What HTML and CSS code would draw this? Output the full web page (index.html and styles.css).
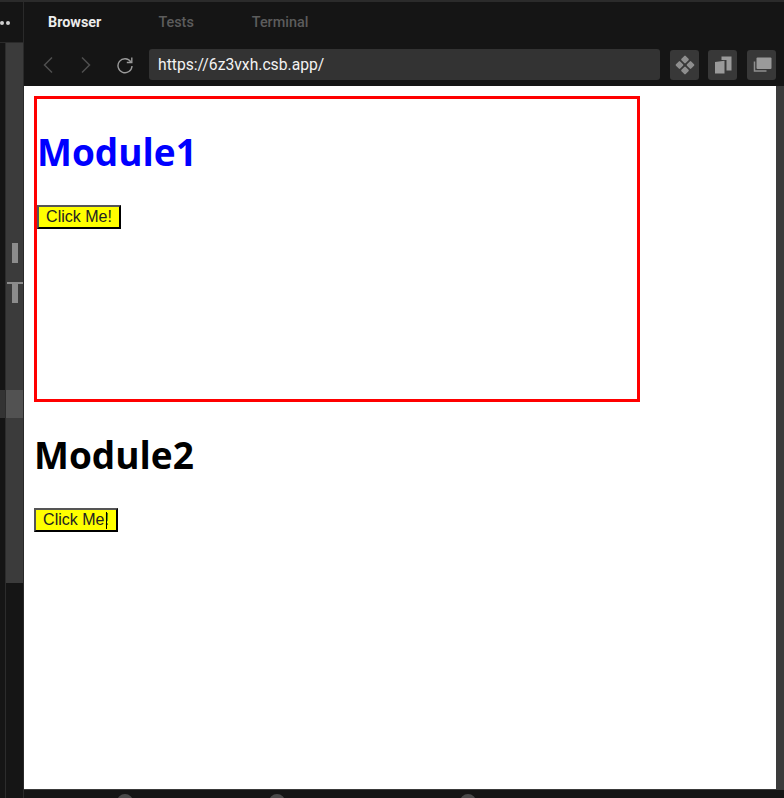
FILE: index.html
```html
<!DOCTYPE html>
<html lang="en">
<head>
    <meta charset="UTF-8">
    <title>Browser</title>
    <link rel="stylesheet" href="styles.css">
</head>
<body>
<div class="app">
    <aside class="sidebar">
        <div class="sidebar-top"><i class="dot"></i><i class="dot"></i></div>
        <div class="sidebar-body">
            <div class="rail"><div class="rail-row"></div></div>
            <div class="file-panel">
                <div class="panel-fill">
                    <span class="glyph glyph-i"></span>
                    <span class="glyph glyph-t"></span>
                    <div class="panel-row"></div>
                </div>
            </div>
        </div>
    </aside>

    <main class="main">
        <nav class="tabs">
            <span class="tab tab-active">Browser</span>
            <span class="tab tab-tests">Tests</span>
            <span class="tab">Terminal</span>
        </nav>

        <div class="address-bar">
            <svg class="nav-icon nav-back" width="12" height="18" viewBox="0 0 12 18"><path d="M10 1.500 2.500 9l7.500 7.500" fill="none" stroke="#4f4f4f" stroke-width="1.500"/></svg>
            <svg class="nav-icon nav-forward" width="12" height="18" viewBox="0 0 12 18"><path d="M2 1.500 9.500 9 2 16.500" fill="none" stroke="#4f4f4f" stroke-width="1.500"/></svg>
            <svg class="nav-icon nav-reload" width="18" height="18" viewBox="0 0 18 18"><path d="M14.800 5.800A7 7 0 1 0 16 10" fill="none" stroke="#9a9a9a" stroke-width="1.400"/><path d="M15.800 1.500v5h-5" fill="none" stroke="#9a9a9a" stroke-width="1.400"/></svg>
            <div class="url-input">https://6z3vxh.csb.app/</div>
            <button class="tool-button">
                <svg width="20" height="20" viewBox="0 0 20 20" fill="#8e8e8e"><rect x="7" y="1.500" width="6" height="6" rx="1" transform="rotate(45 10 4.500)"/><rect x="1.500" y="7" width="6" height="6" rx="1" transform="rotate(45 4.500 10)"/><rect x="12.500" y="7" width="6" height="6" rx="1" transform="rotate(45 15.500 10)"/><rect x="7" y="12.500" width="6" height="6" rx="1" transform="rotate(45 10 15.500)"/></svg>
            </button>
            <button class="tool-button tool-button-wide-gap">
                <svg width="20" height="20" viewBox="0 0 20 20" fill="#9a9a9a"><path d="M8.500 1.500H18.500V15.500H13.500V5H8.500Z"/><path d="M2 7 11.500 5.800V18.500H2Z"/></svg>
            </button>
            <button class="tool-button tool-button-last">
                <svg width="20" height="20" viewBox="0 0 20 20"><path d="M2.500 6.500v9.500h12" fill="none" stroke="#8e8e8e" stroke-width="1.500"/><rect x="4.500" y="2.500" width="15" height="11.500" rx="1" fill="#9a9a9a"/></svg>
            </button>
        </div>

        <div class="preview-row">
            <div class="preview">
                <section class="module-one">
                    <h1 class="module-title">Module1</h1>
                    <button class="click-button">Click Me!</button>
                </section>
                <section class="module-two">
                    <h1 class="module-title module-title-black">Module2</h1>
                    <button class="click-button click-button-caret">Click Me!</button>
                </section>
            </div>
            <div class="preview-gutter"></div>
        </div>

        <div class="bottom-tabs">
            <span class="bottom-tab bottom-console">Console<i class="badge"></i></span>
            <span class="bottom-tab bottom-problems">Problems<i class="badge"></i></span>
            <span class="bottom-tab bottom-react">React DevTools<i class="badge"></i></span>
        </div>
    </main>
</div>
</body>
</html>
```

FILE: styles.css
```css
* {
    box-sizing: border-box;
}

html, body {
    margin: 0;
    height: 100%;
    overflow: hidden;
    background-color: #151515;
}

.app {
    display: flex;
    height: 798px;
    border-top: 2px solid #2b2b2b;
    font-family: Roboto, Arial, sans-serif;
    overflow: hidden;
}

/* left sidebar, mostly cut off */
.sidebar {
    width: 24px;
    flex-shrink: 0;
    display: flex;
    flex-direction: column;
    border-right: 1px solid #2a2a2a;
}

.sidebar-top {
    height: 41px;
    flex-shrink: 0;
    display: flex;
    gap: 2px;
    padding-top: 19px;
    border-bottom: 1px solid #2a2a2a;
}

.dot {
    width: 4px;
    height: 4px;
    border-radius: 50%;
    background-color: #cfcfcf;
}

.sidebar-body {
    flex: 1;
    display: flex;
}

.rail {
    width: 6px;
    background-color: #151515;
    border-right: 1px solid #2c2c2c;
}

.rail-row {
    height: 28px;
    margin-top: 347px;
    background-color: #333;
}

.file-panel {
    flex: 1;
    background-color: #151515;
}

.panel-fill {
    height: 540px;
    background-color: #3b3b3b;
    display: flex;
    flex-direction: column;
    align-items: center;
}

.glyph {
    display: block;
    width: 6px;
    height: 20px;
    background-color: #8c8c8c;
}

.glyph-i {
    margin-top: 200px;
}

.glyph-t {
    margin-top: 20px;
    position: relative;
}

.glyph-t::before {
    content: "";
    position: absolute;
    top: -1px;
    left: -5px;
    width: 16px;
    height: 2px;
    background-color: #8c8c8c;
}

.panel-row {
    width: 100%;
    height: 28px;
    margin-top: 87px;
    background-color: #525252;
}

/* right side */
.main {
    flex: 1;
    min-width: 0;
    display: flex;
    flex-direction: column;
}

.tabs {
    height: 41px;
    flex-shrink: 0;
    display: flex;
    align-items: center;
    padding-left: 24px;
    font-size: 14.4px;
    font-weight: 500;
    color: #5c5c5c;
}

.tab-active {
    margin-right: 57px;
    color: #ececec;
    font-weight: 700;
}

.tab-tests {
    margin-right: 58px;
}

.address-bar {
    height: 43px;
    flex-shrink: 0;
    display: flex;
    align-items: center;
    padding: 0 8px 0 18px;
}

.nav-icon {
    flex-shrink: 0;
}

.nav-forward {
    margin-left: 26px;
}

.nav-reload {
    margin-left: 24px;
}

.url-input {
    flex: 1;
    height: 31px;
    margin-left: 15px;
    margin-right: 10px;
    padding-left: 9px;
    background-color: #333333;
    border-radius: 3px;
    color: #f2f2f2;
    font-size: 15.7px;
    line-height: 31px;
}

.tool-button {
    width: 29px;
    height: 30px;
    padding: 0;
    margin-right: 9px;
    display: flex;
    align-items: center;
    justify-content: center;
    border: none;
    border-radius: 3px;
    background-color: #383838;
}

.tool-button-wide-gap {
    margin-right: 10px;
}

.tool-button-last {
    margin-right: 0;
}

.preview-row {
    height: 703px;
    flex-shrink: 0;
    display: flex;
}

.preview {
    flex: 1;
    padding: 10px;
    background-color: #fff;
    color: #000;
}

.preview-gutter {
    width: 8px;
    background-color: #3b3b3b;
}

.module-one {
    width: 606px;
    height: 306px;
    border: 3px solid red;
}

.module-title {
    margin: 0;
    padding-top: 29px;
    padding-bottom: 30px;
    font-family: "Open Sans", sans-serif;
    font-size: 37px;
    font-weight: 700;
    line-height: 47px;
    color: blue;
}

.module-title-black {
    color: #000;
}

.click-button {
    display: block;
    width: 84px;
    height: 24px;
    padding: 0;
    background-color: yellow;
    border: 2px solid;
    border-color: #555 #000 #000 #555;
    color: #222;
    font-family: "Liberation Sans", Arial, sans-serif;
    font-size: 16px;
    line-height: 18px;
}

.click-button-caret {
    position: relative;
}

/* text cursor sitting over the second button */
.click-button-caret::after {
    content: "";
    position: absolute;
    left: 70px;
    top: 2px;
    width: 1px;
    height: 17px;
    background-color: #000;
}

.bottom-tabs {
    flex: 1;
    display: flex;
    padding: 6px 0 0 25px;
    border-top: 1px solid #3a3a3a;
    color: #8f8f8f;
    font-size: 14px;
    line-height: 16px;
}

.bottom-tab {
    position: relative;
    white-space: nowrap;
}

.bottom-console {
    width: 144px;
}

.bottom-problems {
    width: 153px;
}

.badge {
    position: absolute;
    top: -2px;
    width: 16px;
    height: 16px;
    border-radius: 50%;
    background-color: #4a4a4a;
}

.bottom-console .badge {
    left: 68px;
}

.bottom-problems .badge {
    left: 76px;
}

.bottom-react .badge {
    left: 114px;
}
```
